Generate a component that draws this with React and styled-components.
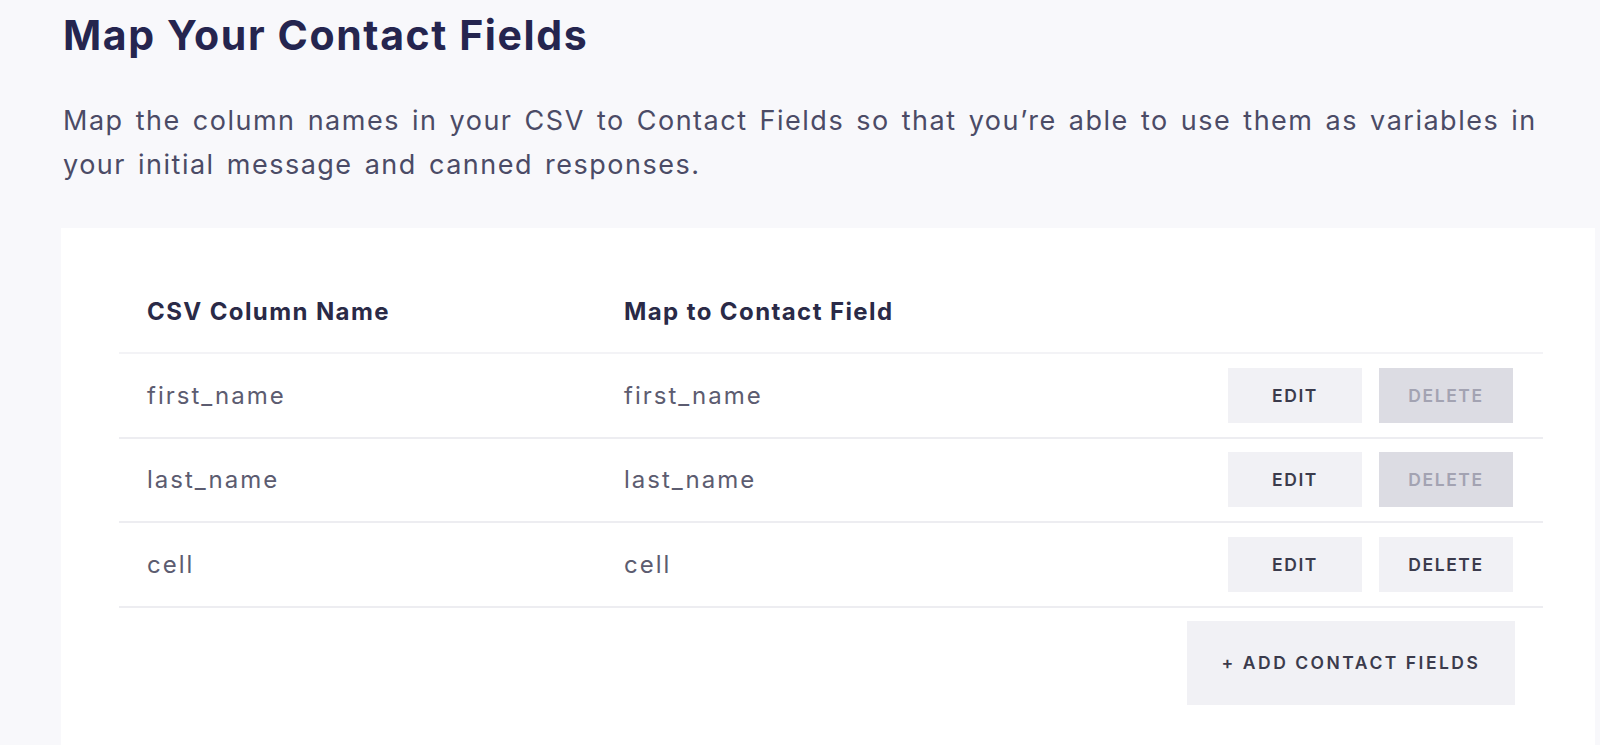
import React from "react";
import styled, { createGlobalStyle } from "styled-components";

const Global = createGlobalStyle`
  html, body { margin: 0; padding: 0; height: 100%; }
  body {
    background: #f8f8fb;
    font-family: Inter, "Noto Sans", "Liberation Sans", sans-serif;
    overflow: hidden;
  }
  #root { height: 100%; }
`;

const Page = styled.div`
  height: 745px;
  display: flex;
  flex-direction: column;
  padding-left: 61px;
  padding-right: 5px;
  box-sizing: border-box;
`;

const Intro = styled.div`
  padding-left: 2px;
`;

const Title = styled.h1`
  margin: 10px 0 0;
  font-size: 41px;
  line-height: 50px;
  font-weight: 700;
  letter-spacing: 1.6px;
  color: #25254f;
`;

const Lead = styled.p`
  margin: 39px 0 0;
  width: 1490px;
  font-size: 27px;
  line-height: 44px;
  font-weight: 400;
  letter-spacing: 1.5px;
  word-spacing: 3px;
  color: #4b4b66;
`;

const Card = styled.section`
  flex: 1;
  margin-top: 41px;
  background: #ffffff;
  padding: 43px 0 0 58px;
  box-sizing: border-box;
`;

const Table = styled.div`
  width: 1424px;
  display: flex;
  flex-direction: column;
`;

const Row = styled.div`
  display: grid;
  grid-template-columns: 477px 1fr auto;
  align-items: center;
  height: ${(p) => (p.$head ? "83px" : "84.5px")};
  border-bottom: 2px solid ${(p) => (p.$head ? "#f3f3f6" : "#ededf1")};
  box-sizing: border-box;
  padding: 0 30px 0 28px;
`;

const HeadCell = styled.div`
  font-size: 24px;
  font-weight: 700;
  color: #2a2a47;
  letter-spacing: 1.4px;
`;

const Cell = styled.div`
  font-size: 24px;
  font-weight: 400;
  color: #5c5c70;
  letter-spacing: 2px;
`;

const Actions = styled.div`
  display: flex;
  gap: 17px;
`;

const Button = styled.button`
  border: none;
  margin: 0;
  width: ${(p) => p.$w || "134px"};
  height: ${(p) => p.$h || "55px"};
  background: ${(p) => (p.$disabled ? "#dcdce3" : "#f1f1f5")};
  color: ${(p) => (p.$disabled ? "#a3a3b2" : "#3b3b4c")};
  font-family: Inter, "Noto Sans", sans-serif;
  font-size: 17.5px;
  font-weight: 600;
  letter-spacing: ${(p) => p.$ls || "1.6px"};
  text-transform: uppercase;
  cursor: pointer;
`;

const Footer = styled.div`
  display: flex;
  justify-content: flex-end;
  padding: 13px 28px 0 0;
`;

const rows = [
  { csv: "first_name", field: "first_name", locked: true },
  { csv: "last_name", field: "last_name", locked: true },
  { csv: "cell", field: "cell", locked: false },
];

export default function App() {
  return (
    <>
      <Global />
      <Page>
        <Intro>
          <Title>Map Your Contact Fields</Title>
          <Lead>
            Map the column names in your CSV to Contact Fields so that you’re able to use them as
            variables in your initial message and canned responses.
          </Lead>
        </Intro>
        <Card>
          <Table>
            <Row $head>
              <HeadCell>CSV Column Name</HeadCell>
              <HeadCell>Map to Contact Field</HeadCell>
              <div />
            </Row>
            {rows.map((r) => (
              <Row key={r.csv}>
                <Cell>{r.csv}</Cell>
                <Cell>{r.field}</Cell>
                <Actions>
                  <Button>Edit</Button>
                  <Button $disabled={r.locked}>Delete</Button>
                </Actions>
              </Row>
            ))}
            <Footer>
              <Button $w="328px" $h="84px" $ls="2.5px">+ Add Contact Fields</Button>
            </Footer>
          </Table>
        </Card>
      </Page>
    </>
  );
}
